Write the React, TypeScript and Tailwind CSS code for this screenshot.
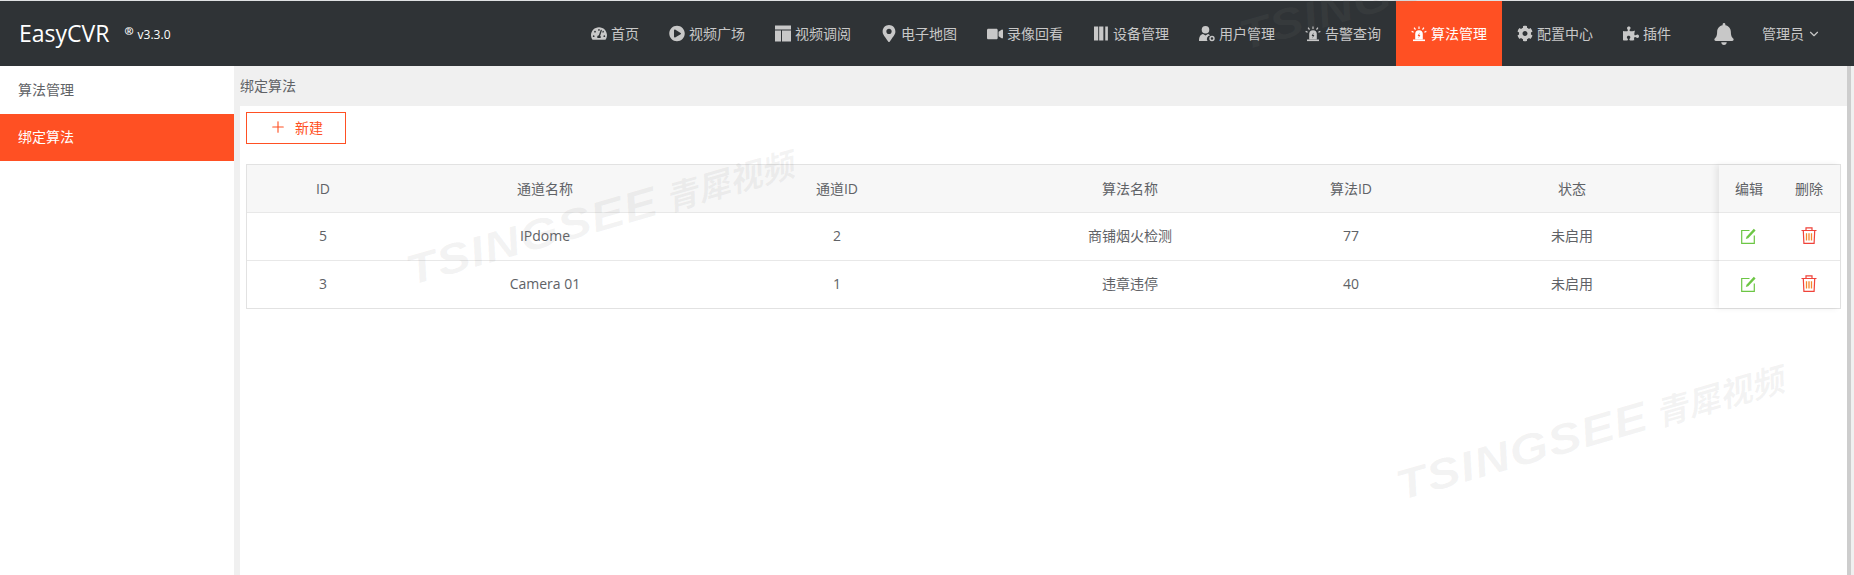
import type { ReactNode } from "react";
import { ChevronDown, Plus } from "lucide-react";
import {
  FaBell,
  FaCog,
  FaMapMarkerAlt,
  FaPlayCircle,
  FaPuzzlePiece,
  FaTachometerAlt,
  FaVideo,
} from "react-icons/fa";

const FONT = "font-['Open_Sans','Noto_Sans_CJK_SC',sans-serif]";

function TableIcon() {
  return (
    <svg viewBox="0 0 16 16" className="h-[17px] w-[17px]" fill="currentColor">
      <path d="M0 0h16v4H0zM0 5h6v11H0zM7 5h9v11H7z" />
    </svg>
  );
}

function DeviceIcon() {
  return (
    <svg viewBox="0 0 16 16" className="h-[17px] w-[15px]" fill="currentColor">
      <path d="M0 .5h4.500v15H0zM5.500.5H10v15H5.500zM12 .5h2.800v15H12z" />
    </svg>
  );
}

function UserIcon() {
  return (
    <svg viewBox="0 0 16 16" className="h-[19px] w-[19px]" fill="currentColor">
      <circle cx="6.500" cy="4.200" r="3.800" />
      <path d="M0 15.500c0-4.500 1.500-6.500 4-7L6.500 10 9 8.500c.8.3 1.500.8 2 1.500a3.500 3.500 0 0 0-2.500 5.500z" />
      <circle cx="13" cy="13" r="2" fill="none" stroke="currentColor" strokeWidth="1.400" />
    </svg>
  );
}

function SirenIcon({ active }: { active?: boolean }) {
  return (
    <svg viewBox="0 0 16 16" className="h-[19px] w-[19px]" fill="currentColor">
      <path d="M4.200 14V8.500a3.800 3.800 0 0 1 7.600 0V14z" />
      <path d="M2 14h12v1.600H2z" />
      <path d="M7.400 1h1.200v2.400H7.400zM2.600 2.400l1-.7 1.400 2-1 .7zM12.400 1.700l1 .7L12 4.400l-1-.7zM.4 6.400l.5-1.100 2 .9-.5 1.100zM15.100 5.300l.5 1.100-2 .9-.5-1.100z" />
      <path d="M8.600 7 6.600 10.400h1.300l-.5 2.400 2-3.400H8.100z" fill={active ? "#ff5023" : "#2f3336"} />
    </svg>
  );
}

function EditIcon() {
  return (
    <svg viewBox="0 0 16 17" className="h-[17px] w-[16px]" fill="none" stroke="#6cc644" strokeWidth="1.200">
      <path d="M8.500 3.500H.7v12.800h12.600V8.500" />
      <path d="M4.800 12 5.500 9.800 12.800 1.800l1.800 1.600L7.200 11.200z" fill="#6cc644" stroke="none" />
    </svg>
  );
}

function TrashIcon() {
  return (
    <svg viewBox="0 0 16 17" className="h-[17px] w-[16px]" fill="none" stroke="#f0433a" strokeWidth="1.200">
      <path d="M.5 3.500h15M5 3.300V.8h6v2.500M2.300 3.700l.6 12.600h10.200l.6-12.600" />
      <path d="M5.500 6.300v7.200M8 6.300v7.200M10.500 6.300v7.200" stroke="#f5872f" strokeWidth="1.300" />
    </svg>
  );
}

const NAV: { label: string; icon: ReactNode; active?: boolean }[] = [
  { label: "首页", icon: <FaTachometerAlt className="text-[17px]" /> },
  { label: "视频广场", icon: <FaPlayCircle className="text-[17px]" /> },
  { label: "视频调阅", icon: <TableIcon /> },
  { label: "电子地图", icon: <FaMapMarkerAlt className="text-[17px]" /> },
  { label: "录像回看", icon: <FaVideo className="text-[16px]" /> },
  { label: "设备管理", icon: <DeviceIcon /> },
  { label: "用户管理", icon: <UserIcon /> },
  { label: "告警查询", icon: <SirenIcon /> },
  { label: "算法管理", icon: <SirenIcon active />, active: true },
  { label: "配置中心", icon: <FaCog className="text-[17px]" /> },
  { label: "插件", icon: <FaPuzzlePiece className="text-[17px]" /> },
];

const ROWS = [
  { id: "5", name: "IPdome", channel: "2", algo: "商铺烟火检测", algoId: "77", state: "未启用" },
  { id: "3", name: "Camera 01", channel: "1", algo: "违章违停", algoId: "40", state: "未启用" },
];

const COLS = "grid grid-cols-[152px_292px_292px_294px_148px_294px]";

function Watermark({ className }: { className: string }) {
  return (
    <div className={`absolute origin-left -rotate-[16deg] whitespace-nowrap font-['Liberation_Sans','Noto_Sans_CJK_SC',sans-serif] font-bold italic text-[#80808018] ${className}`}>
      <span className="mr-[48px] inline-block origin-left scale-x-[1.18] text-[42px] tracking-[1px]">TSINGSEE</span>
      <span className="text-[33px]">青犀视频</span>
    </div>
  );
}

export default function App() {
  return (
    <div className={`relative flex h-[575px] flex-col overflow-hidden bg-[#f0f0f0] text-[14px] text-[#606266] ${FONT}`}>
      {/* Header */}
      <header className="flex h-[66px] shrink-0 items-stretch border-t-[1px] border-[#dfe1e3] bg-[#2f3336] text-[#c8c8c8]">
        <div className="flex items-center pl-[19px] text-white">
          <span className="text-[23px] leading-none">EasyCVR</span>
          <span className="ml-[15px] mt-[-4px] text-[11px] font-bold">®</span>
          <span className="ml-[4px] mt-[3px] text-[12px]">v3.3.0</span>
        </div>
        <nav className="ml-auto flex items-stretch">
          {NAV.map((item) => (
            <div
              key={item.label}
              className={`flex items-center gap-[4px] px-[15px] ${item.active ? "bg-[#ff5023] text-white" : ""}`}
            >
              <span className="flex w-[16px] justify-center">{item.icon}</span>
              <span>{item.label}</span>
            </div>
          ))}
        </nav>
        <div className="flex items-center pl-[27px] pr-[33px]">
          <FaBell className="text-[22px]" />
          <span className="ml-[27px]">管理员</span>
          <ChevronDown className="ml-[3px] h-[14px] w-[14px]" />
        </div>
      </header>

      <div className="flex min-h-0 flex-1">
        {/* Sidebar */}
        <aside className="w-[234px] shrink-0 bg-white">
          <div className="flex h-[48px] items-center pb-[2px] pl-[18px]">算法管理</div>
          <div className="flex h-[47px] items-center bg-[#ff5023] pb-[2px] pl-[18px] text-white">绑定算法</div>
        </aside>

        {/* Main */}
        <main className="ml-[6px] flex min-w-0 flex-1 flex-col">
          <div className="flex h-[40px] shrink-0 items-center pb-[2px]">绑定算法</div>
          <div className="flex-1 bg-white pl-[6px] pt-[6px]">
            <button className="flex h-[32px] w-[100px] items-center justify-center gap-[8px] border border-[#ff5023] pb-[2px] text-[#ff5023]">
              <Plus className="h-[18px] w-[18px]" strokeWidth={1.5} />
              新建
            </button>

            <div className="relative mt-[20px] w-[1595px] border border-[#e2e2e2]">
              <div className={`${COLS} h-[48px] items-center border-b border-[#e8e8e8] bg-[#f7f7f7] text-center`}>
                <span>ID</span>
                <span>通道名称</span>
                <span>通道ID</span>
                <span>算法名称</span>
                <span>算法ID</span>
                <span>状态</span>
              </div>
              {ROWS.map((row, i) => (
                <div
                  key={row.id}
                  className={`${COLS} items-center pb-[2px] text-center ${i === 0 ? "h-[48px] border-b border-[#e8e8e8]" : "h-[47px]"}`}
                >
                  <span>{row.id}</span>
                  <span>{row.name}</span>
                  <span>{row.channel}</span>
                  <span>{row.algo}</span>
                  <span>{row.algoId}</span>
                  <span>{row.state}</span>
                </div>
              ))}

              {/* Fixed right columns */}
              <div className="absolute bottom-0 right-0 top-0 w-[121px] bg-white shadow-[-3px_0_6px_rgba(0,0,0,0.08)]">
                <div className="grid h-[48px] grid-cols-[60px_60px] items-center border-b border-[#e8e8e8] bg-[#f7f7f7] text-center">
                  <span>编辑</span>
                  <span>删除</span>
                </div>
                {ROWS.map((row, i) => (
                  <div
                    key={row.id}
                    className={`grid grid-cols-[60px_60px] items-center justify-items-center pb-[2px] ${i === 0 ? "h-[48px] border-b border-[#e8e8e8]" : "h-[47px]"}`}
                  >
                    <EditIcon />
                    <TrashIcon />
                  </div>
                ))}
              </div>
            </div>
          </div>
        </main>

        {/* Scroll track */}
        <div className="w-[7px] shrink-0">
          <div className="h-full w-[4px] bg-[#cdcdcd]" />
        </div>
      </div>

      <div className="pointer-events-none absolute inset-0">
        <Watermark className="left-[407px] top-[240px]" />
        <Watermark className="left-[1397px] top-[455px]" />
        <Watermark className="left-[1240px] top-[5px]" />
      </div>
    </div>
  );
}
